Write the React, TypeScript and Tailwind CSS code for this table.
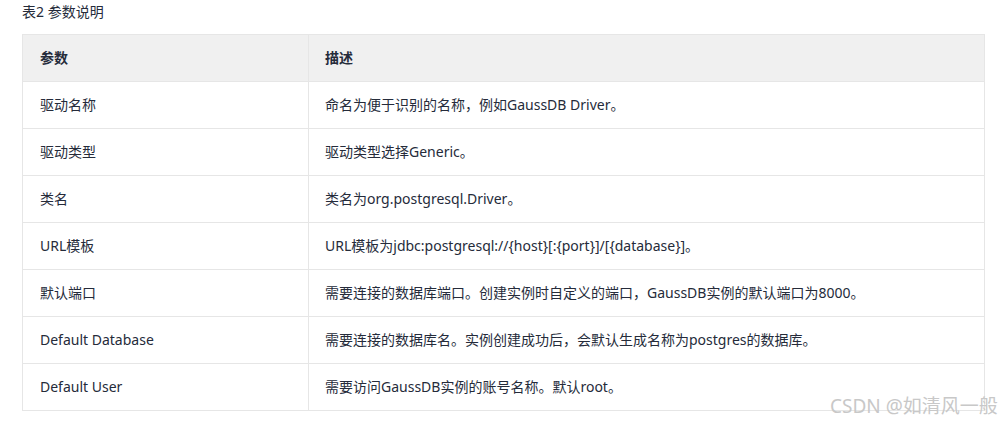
import React from "react";

const rows: [string, string][] = [
  ["驱动名称", "命名为便于识别的名称，例如GaussDB Driver。"],
  ["驱动类型", "驱动类型选择Generic。"],
  ["类名", "类名为org.postgresql.Driver。"],
  ["URL模板", "URL模板为jdbc:postgresql://{host}[:{port}]/[{database}]。"],
  ["默认端口", "需要连接的数据库端口。创建实例时自定义的端口，GaussDB实例的默认端口为8000。"],
  ["Default Database", "需要连接的数据库名。实例创建成功后，会默认生成名称为postgres的数据库。"],
  ["Default User", "需要访问GaussDB实例的账号名称。默认root。"],
];

export default function App() {
  return (
    <div
      className="relative w-[999px] h-[424px] bg-white text-[#252b3a] overflow-hidden"
      style={{ fontFamily: '"Noto Sans", "Noto Sans CJK SC", sans-serif' }}
    >
      <div className="pl-[22px] pt-[2px] h-[34px] text-[14px] leading-[20px]">表2 参数说明</div>
      <div className="pl-[22px]">
        <table className="w-[963px] border-collapse text-[14px] leading-[20px]">
          <thead>
            <tr className="bg-[#f0f0f0] h-[47px]">
              <th className="w-[286px] border border-[#e6e6e6] pl-[17px] text-left font-semibold">参数</th>
              <th className="border border-[#e6e6e6] pl-[16px] text-left font-semibold">描述</th>
            </tr>
          </thead>
          <tbody>
            {rows.map(([a, b]) => (
              <tr key={a} className="h-[47px]">
                <td className="border border-[#e6e6e6] pl-[17px]">{a}</td>
                <td className="border border-[#e6e6e6] pl-[16px]">{b}</td>
              </tr>
            ))}
          </tbody>
        </table>
      </div>
      <div className="absolute left-[830px] top-[394px] text-[19px] leading-[24px] text-[#c8c8c8] whitespace-nowrap">
        CSDN @如清风一般
      </div>
    </div>
  );
}
